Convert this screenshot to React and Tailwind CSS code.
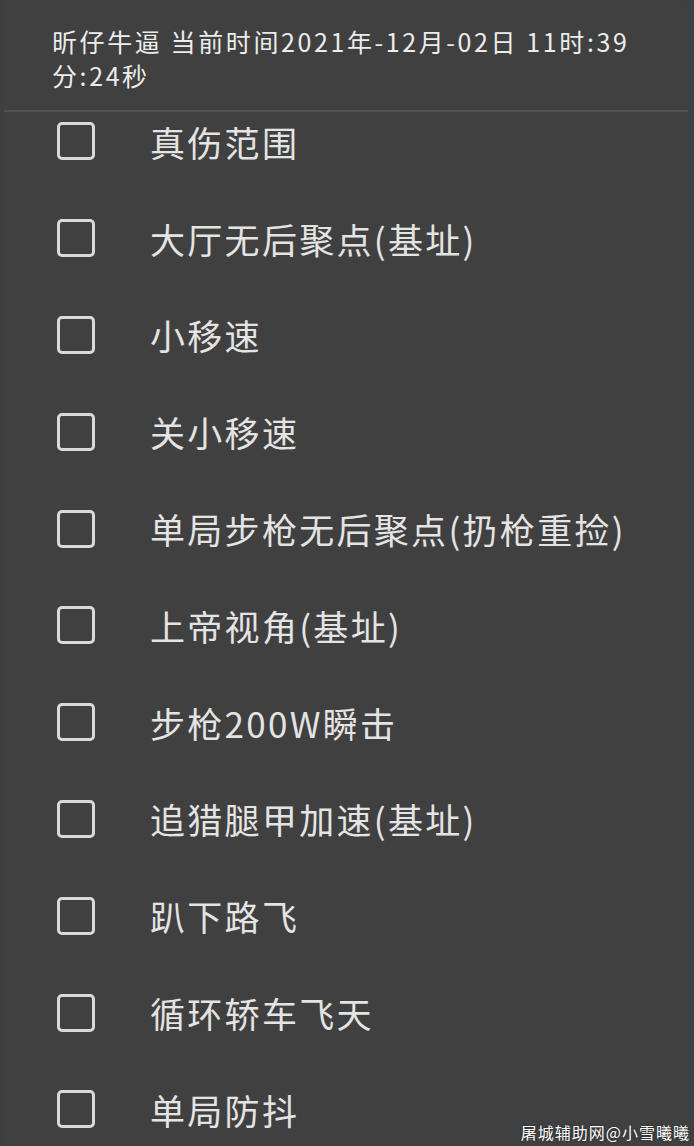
import React from 'react';

const items = [
  '真伤范围',
  '大厅无后聚点(基址)',
  '小移速',
  '关小移速',
  '单局步枪无后聚点(扔枪重捡)',
  '上帝视角(基址)',
  '步枪200W瞬击',
  '追猎腿甲加速(基址)',
  '趴下路飞',
  '循环轿车飞天',
  '单局防抖',
];

const CheckRow = ({ label }) => (
  <div className="flex h-[96.8px] items-center">
    <div className="ml-[53px] h-[38px] w-[38px] rounded-[5px] border-[3px] border-[#d9d9d9]" />
    <span className="ml-[55px] text-[35px] leading-none tracking-[2.3px] text-[#e4e4e4]">{label}</span>
  </div>
);

export default function App() {
  return (
    <div
      className="relative h-[1146px] w-[694px] overflow-hidden bg-[#3a4044]"
      style={{ fontFamily: '"Noto Sans CJK SC", "Noto Sans", sans-serif' }}
    >
      <div className="ml-[4px] flex h-full w-[684px] flex-col rounded-tr-[14px] bg-[#404040]">
        {/* header with current time */}
        <div className="px-[48px] pt-[24px] text-[25px] leading-[34px] tracking-[2.6px] text-[#ececec]">
          <div className="whitespace-nowrap">昕仔牛逼 当前时间2021年-12月-02日 11时:39</div>
          <div>分:24秒</div>
        </div>
        <div className="mt-[18px] h-[2px] bg-[#525252]" />

        {/* option list, scrolled slightly */}
        <div className="flex-1 overflow-hidden">
          <div className="-mt-[19px]">
            {items.map((label) => (
              <CheckRow key={label} label={label} />
            ))}
          </div>
        </div>
      </div>

      <div className="absolute bottom-[6px] right-[4px] text-[16px] leading-none tracking-[1px] text-white [text-shadow:0_0_2px_rgba(0,0,0,0.6)]">
        屠城辅助网@小雪曦曦
      </div>
    </div>
  );
}
